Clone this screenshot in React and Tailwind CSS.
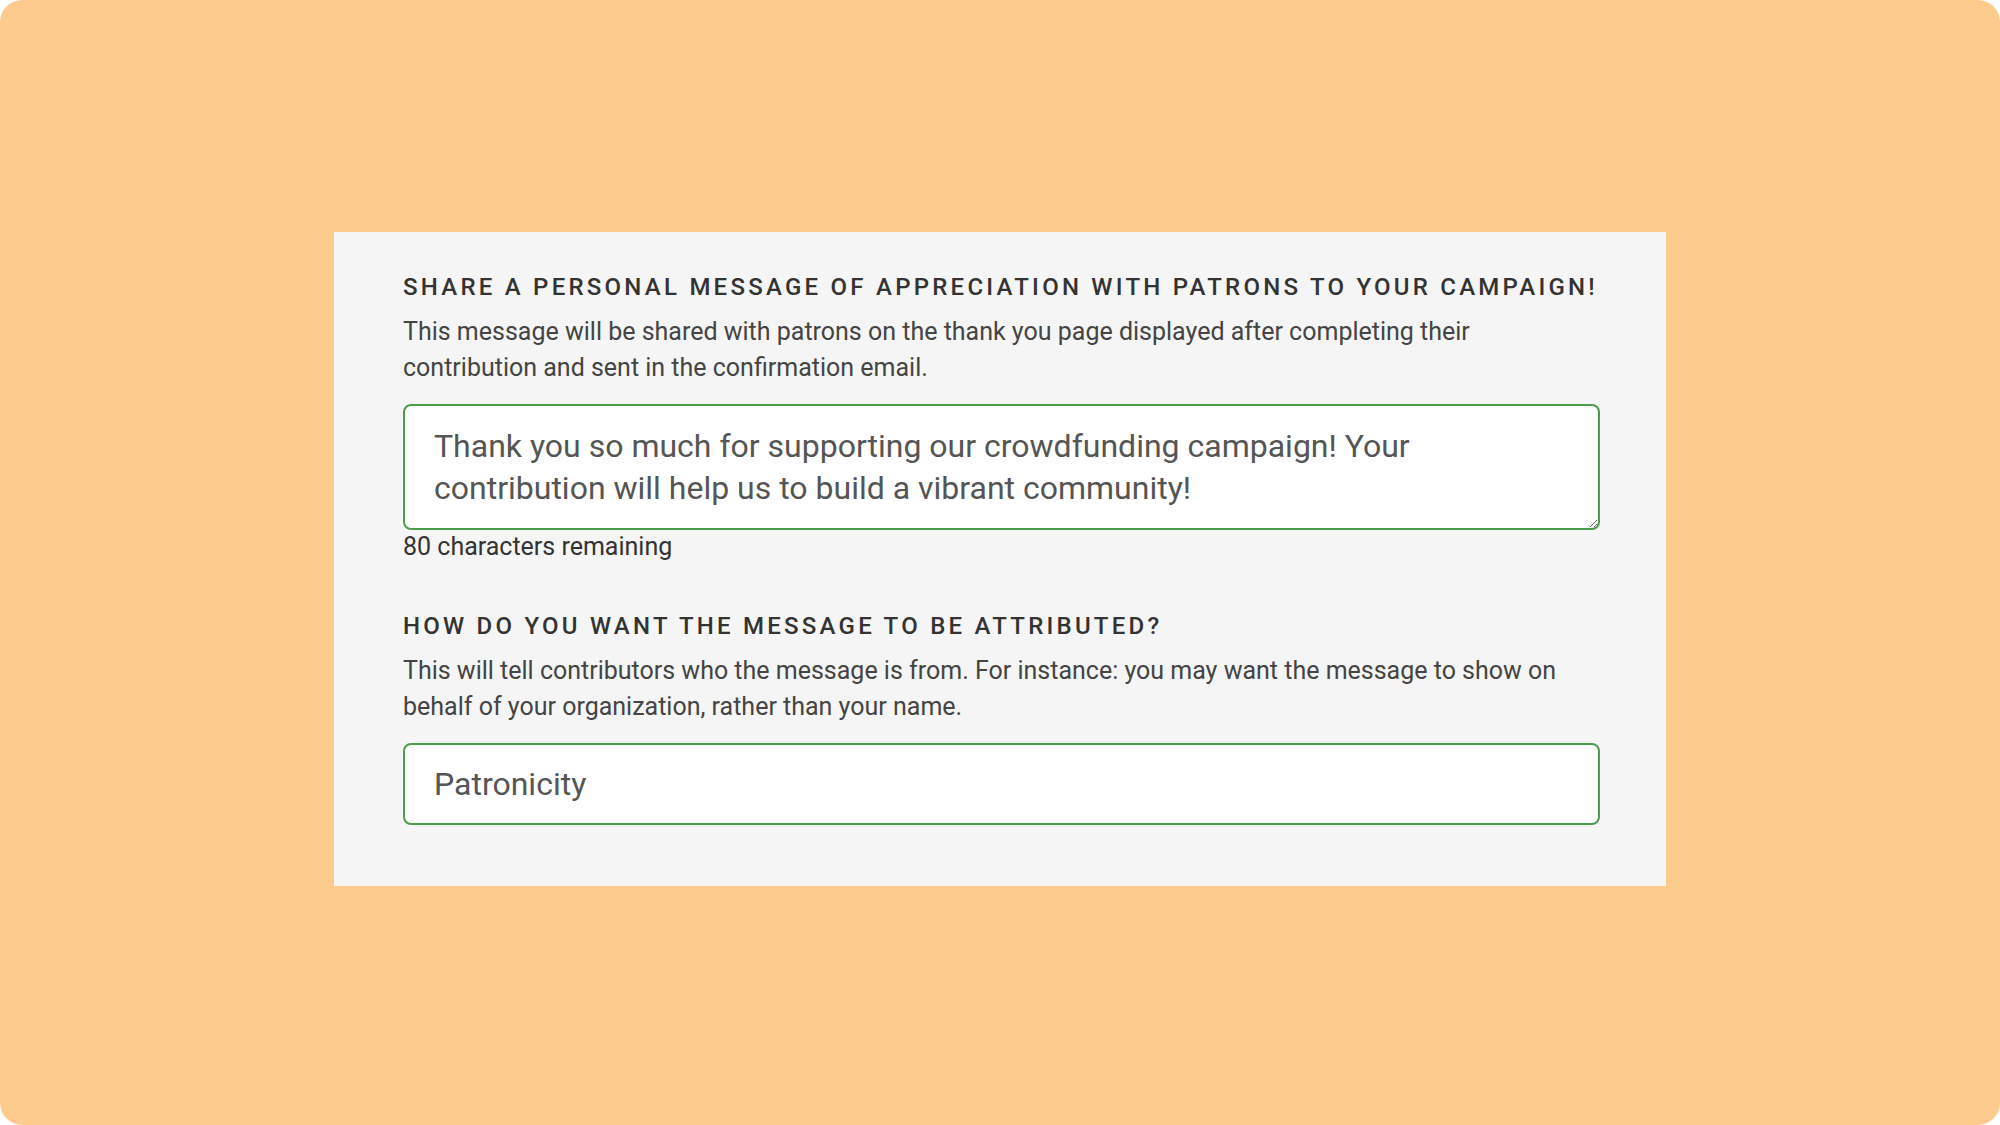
import { useState } from 'react';

const MAX = 200;

const App = () => {
  const [message, setMessage] = useState(
    'Thank you so much for supporting our crowdfunding campaign! Your contribution will help us to build a vibrant community!'
  );
  const [from, setFrom] = useState('Patronicity');

  return (
    <div className="w-[2000px] h-[1125px] bg-white">
      <div className="w-full h-full bg-[#fecb8f] rounded-[22px] flex items-center justify-center font-['Roboto',sans-serif]">
        <div className="w-[1332px] bg-[#f5f5f5] pl-[69px] pr-[66px] pt-[40px] pb-[61px] -mt-[8px]">
          <h2 className="text-[24px] font-medium tracking-[0.135em] text-[#333] leading-[30px]">
            SHARE A PERSONAL MESSAGE OF APPRECIATION WITH PATRONS TO YOUR CAMPAIGN!
          </h2>
          <p className="mt-[12px] text-[25px] leading-[36px] text-[#444]">
            This message will be shared with patrons on the thank you page displayed after completing their
            <br />
            contribution and sent in the confirmation email.
          </p>
          <textarea
            value={message}
            onChange={(e) => setMessage(e.target.value)}
            className="mt-[18px] block w-full h-[126px] rounded-[8px] border-2 border-[#4c9c4c] bg-white px-[29px] pt-[19px] text-[32px] leading-[42px] text-[#555] outline-none"
          />
          <div className="mt-[2px] text-[25px] leading-[30px] text-[#333]">
            {MAX - message.length} characters remaining
          </div>

          <h2 className="mt-[49px] text-[24px] font-medium tracking-[0.135em] text-[#333] leading-[30px]">
            HOW DO YOU WANT THE MESSAGE TO BE ATTRIBUTED?
          </h2>
          <p className="mt-[12px] text-[25px] leading-[36px] text-[#444]">
            This will tell contributors who the message is from. For instance: you may want the message to show on
            <br />
            behalf of your organization, rather than your name.
          </p>
          <input
            value={from}
            onChange={(e) => setFrom(e.target.value)}
            className="mt-[18px] block w-full h-[82px] rounded-[8px] border-2 border-[#4c9c4c] bg-white px-[29px] text-[32px] text-[#555] outline-none"
          />
        </div>
      </div>
    </div>
  );
};

export default App;
